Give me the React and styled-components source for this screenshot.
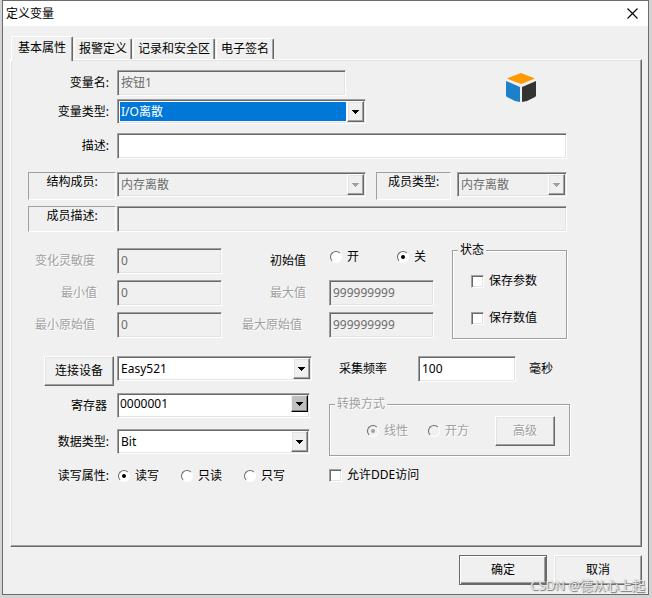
import React, { useState } from 'react';
import styled, { createGlobalStyle, css } from 'styled-components';

const GlobalStyle = createGlobalStyle`
  *, *::before, *::after {
    box-sizing: border-box;
  }

  body {
    margin: 0;
    background: #d4d4d4;
  }

  body, button, input, select {
    font-family: "Noto Sans", "Noto Sans CJK SC", sans-serif;
    font-size: 12px;
    line-height: 16px;
    color: #000;
  }
`;

const sunken = css`
  border: 1px solid;
  border-color: #a0a0a0 #fff #fff #a0a0a0;
  box-shadow: inset 1px 1px 0 #696969, inset -1px -1px 0 #e3e3e3;
`;

const raised = css`
  border: 1px solid;
  border-color: #fff #696969 #696969 #fff;
  box-shadow: inset -1px -1px 0 #a0a0a0, inset 1px 1px 0 #e3e3e3;
`;

const faded = css`
  color: #a0a0a0;
  text-shadow: 1px 1px 0 #fff;
`;

const Page = styled.div`
  padding: 0 3px 3px 2px;
`;

const Dialog = styled.form`
  position: relative;
  border: 1px solid #6b6b6b;
  background: #f0f0f0;
`;

const TitleBar = styled.header`
  display: flex;
  align-items: center;
  justify-content: space-between;
  height: 25px;
  padding: 0 10px 0 3px;
  background: #fff;
`;

const Title = styled.h1`
  margin: 0;
  font-size: 12px;
  font-weight: normal;
`;

const CloseButton = styled.button`
  display: flex;
  padding: 0;
  border: 0;
  background: none;
`;

const Tabs = styled.div`
  display: flex;
  align-items: flex-end;
  gap: 1px;
  padding: 10px 8px 0;
`;

const Tab = styled.button`
  position: relative;
  height: ${({ $active }) => ($active ? 25 : 21)}px;
  margin-bottom: ${({ $active }) => ($active ? -2 : 0)}px;
  padding: ${({ $active }) => ($active ? '0 6px 3px' : '0 4px')};
  border: 0 solid;
  border-width: 1px 1px 0 1px;
  border-color: #fff #696969 #fff #fff;
  border-radius: 2px 2px 0 0;
  box-shadow: inset -1px 0 0 #a0a0a0;
  background: #f0f0f0;
  white-space: nowrap;
`;

const Panel = styled.section`
  margin: 0 6px 0 7px;
  padding: 10px 74px 52px 1px;
  ${raised}
`;

const Split = styled.div`
  display: flex;
  align-items: flex-start;
  justify-content: space-between;
  margin-bottom: ${({ $space }) => $space || 0}px;
`;

const Column = styled.div`
  display: flex;
  flex: none;
  flex-direction: column;
  gap: ${({ $gap }) => $gap || 0}px;
  margin-right: ${({ $lead }) => ($lead ? 'auto' : 0)};
`;

const Sections = styled.div`
  display: flex;
  align-items: flex-start;
  gap: 17px;
`;

const Row = styled.div`
  display: flex;
  align-items: ${({ $align }) => $align || 'center'};
  margin-bottom: ${({ $space }) => $space || 0}px;
`;

const Label = styled.label`
  flex: none;
  width: ${({ $width }) => $width || 105}px;
  padding-right: ${({ $inset }) => $inset || 8}px;
  text-align: right;
  ${({ $tall }) => $tall && 'line-height: 26px;'}
  ${({ $faded }) => $faded && faded}
`;

const GroupLabel = styled.label`
  flex: none;
  width: ${({ $width }) => $width}px;
  height: ${({ $tall }) => ($tall ? 28 : 26)}px;
  margin: ${({ $margin }) => $margin};
  padding-top: 1px;
  border: 1px solid;
  border-color: #a0a0a0 #fff #fff #a0a0a0;
  text-align: center;
`;

const TextInput = styled.input`
  flex: ${({ $width }) => ($width ? 'none' : '1 1 0')};
  width: ${({ $width }) => ($width ? `${$width}px` : 'auto')};
  min-width: 0;
  height: 26px;
  padding: 0 3px 2px;
  border-radius: 0;
  outline: 0;
  background: #fff;
  ${sunken}

  &:disabled {
    background: #f0f0f0;
    color: #6d6d6d;
  }
`;

const ComboFrame = styled.div`
  display: flex;
  flex: ${({ $width }) => ($width ? 'none' : '1 1 0')};
  width: ${({ $width }) => ($width ? `${$width}px` : 'auto')};
  height: 25px;
  padding: 1px;
  background: ${({ $disabled }) => ($disabled ? '#f0f0f0' : '#fff')};
  ${sunken}
`;

const ComboSelect = styled.select`
  flex: 1 1 0;
  min-width: 0;
  margin: 1px;
  padding: 0 1px;
  border: 0;
  border-radius: 0;
  outline: 0;
  appearance: none;
  background: ${({ $selected }) => ($selected ? '#0078d7' : 'transparent')};
  color: ${({ $selected }) => ($selected ? '#fff' : '#000')};

  &:disabled {
    color: #6d6d6d;
    opacity: 1;
  }
`;

const ComboInput = styled.input`
  flex: 1 1 0;
  min-width: 0;
  padding: 0 1px 3px;
  border: 0;
  outline: 0;
  background: transparent;
`;

const ArrowBox = styled.span`
  display: flex;
  align-items: center;
  justify-content: center;
  flex: none;
  width: 17px;
  pointer-events: none;
  background: #f0f0f0;
  color: ${({ $disabled }) => ($disabled ? '#a0a0a0' : '#000')};
  ${raised}
`;

const PickButton = styled.button`
  display: flex;
  align-items: center;
  justify-content: center;
  flex: none;
  width: 17px;
  height: 17px;
  padding: 0;
  border: 1px solid;
  border-color: #f0f0f0 #000 #000 #f0f0f0;
  box-shadow: inset -1px -1px 0 #808080;
  background: #c0c0c0;
`;

const PushButton = styled.button`
  flex: none;
  width: ${({ $width }) => $width}px;
  height: 30px;
  margin: ${({ $margin }) => $margin || 0};
  padding: 0;
  border-radius: 0;
  background: #f0f0f0;
  ${raised}
  ${({ $primary }) => $primary && css`
    border-color: #696969;
    box-shadow: inset 1px 1px 0 #fff, inset -1px -1px 0 #696969,
      inset -2px -2px 0 #a0a0a0;
  `}

  &:disabled {
    ${faded}
  }
`;

const Choices = styled.div`
  display: flex;
  gap: ${({ $gap }) => $gap}px;
  height: ${({ $height }) => $height || 18}px;
`;

const ChoiceLabel = styled.label`
  display: flex;
  align-items: center;
  gap: 5px;
  white-space: nowrap;
  ${({ $faded }) => $faded && faded}
`;

const Radio = styled.input`
  display: grid;
  place-items: center;
  flex: none;
  width: 12px;
  height: 12px;
  margin: 0 0 0 1px;
  appearance: none;
  border: 1px solid;
  border-color: #696969 #fff #fff #696969;
  border-radius: 50%;
  background: #fff;

  &:checked::after {
    content: "";
    width: 4px;
    height: 4px;
    border-radius: 50%;
    background: #000;
  }

  &:disabled {
    background: #f0f0f0;
  }

  &:disabled:checked::after {
    background: #a0a0a0;
  }
`;

const Checkbox = styled.input`
  display: grid;
  place-items: center;
  flex: none;
  width: 13px;
  height: 13px;
  margin: 0;
  appearance: none;
  background: #fff;
  ${sunken}

  &:checked::after {
    content: "";
    width: 4px;
    height: 7px;
    border: solid #000;
    border-width: 0 2px 2px 0;
    transform: rotate(45deg);
  }
`;

const Group = styled.fieldset`
  flex: none;
  min-width: 0;
  width: ${({ $width }) => $width}px;
  margin: ${({ $margin }) => $margin || 0};
  padding: 0;
  border: 1px solid #a0a0a0;
  box-shadow: 1px 1px 0 #fff, inset 1px 1px 0 #fff;
`;

const Legend = styled.legend`
  margin-left: 5px;
  padding: 0 2px;
  background: #f0f0f0;
  ${({ $faded }) => $faded && faded}
`;

const StateOptions = styled.div`
  display: flex;
  flex-direction: column;
  gap: 19px;
  padding: 14px 0 11px 18px;
`;

const ConvertOptions = styled.div`
  display: flex;
  justify-content: space-between;
  padding: 4px 14px 9px 36px;
`;

const Unit = styled.span`
  margin-left: 13px;
`;

const Footer = styled.footer`
  display: flex;
  justify-content: flex-end;
  gap: 7px;
  padding: 8px 6px 9px;
`;

const Watermark = styled.span`
  position: absolute;
  right: 3px;
  bottom: 0;
  font-size: 13px;
  line-height: 18px;
  color: rgba(255, 255, 255, 0.8);
  text-shadow: 1px 1px 1px #777, 0 0 1px #999;
  pointer-events: none;
`;

const CubeIcon = styled.svg`
  flex: none;
  margin: 3px 31px 0 0;
`;

const Arrow = () => (
  <svg width="7" height="4" viewBox="0 0 7 4" shapeRendering="crispEdges" aria-hidden="true">
    <path d="M0 0h7v1H6v1H5v1H4v1H3V3H2V2H1V1H0z" fill="currentColor" />
  </svg>
);

const Combo = ({ id, value, width, selected, disabled }) => (
  <ComboFrame $width={width} $disabled={disabled}>
    <ComboSelect id={id} defaultValue={value} $selected={selected} disabled={disabled}>
      <option>{value}</option>
    </ComboSelect>
    <ArrowBox $disabled={disabled}><Arrow /></ArrowBox>
  </ComboFrame>
);

const Choice = ({ name, text, value, onChange, disabled }) => (
  <ChoiceLabel $faded={disabled}>
    <Radio
      type="radio"
      name={name}
      checked={value === text}
      onChange={() => onChange && onChange(text)}
      disabled={disabled}
    />
    {text}
  </ChoiceLabel>
);

const Field = ({ id, label, value, inset, labelWidth }) => (
  <Row>
    <Label htmlFor={id} $inset={inset} $width={labelWidth} $faded>{label}</Label>
    <TextInput id={id} $width={105} defaultValue={value} disabled />
  </Row>
);

const tabs = ['基本属性', '报警定义', '记录和安全区', '电子签名'];

const App = () => {
  const [tab, setTab] = useState(tabs[0]);
  const [initial, setInitial] = useState('关');
  const [access, setAccess] = useState('读写');

  return (
    <Page>
      <GlobalStyle />
      <Dialog onSubmit={e => e.preventDefault()}>
        <TitleBar>
          <Title>定义变量</Title>
          <CloseButton type="button" aria-label="关闭">
            <svg width="11" height="11" viewBox="0 0 11 11">
              <path d="M.5.5l10 10M10.5.5l-10 10" stroke="#000" strokeWidth="1.1" />
            </svg>
          </CloseButton>
        </TitleBar>

        <Tabs role="tablist">
          {tabs.map(name => (
            <Tab
              key={name}
              type="button"
              role="tab"
              aria-selected={tab === name}
              $active={tab === name}
              onClick={() => setTab(name)}
            >
              {name}
            </Tab>
          ))}
        </Tabs>

        <Panel>
          <Split $space={9}>
            <Column $gap={3}>
              <Row>
                <Label htmlFor="name">变量名:</Label>
                <TextInput id="name" $width={229} defaultValue="按钮1" disabled />
              </Row>
              <Row>
                <Label htmlFor="type">变量类型:</Label>
                <Combo id="type" value="I/O离散" width={249} selected />
              </Row>
            </Column>
            <CubeIcon width="30" height="30" viewBox="0 0 30 30" aria-hidden="true">
              <path d="M15 0L29 5.5 15 11 1 5.5z" fill="#ff9900" />
              <path d="M0 8L14 14v15L9 28 1 24 0 23z" fill="#1c81c8" />
              <path d="M30 8L16 14v15l5-1 8-4 1-1z" fill="#333" />
            </CubeIcon>
          </Split>

          <Row $space={13}>
            <Label htmlFor="description">描述:</Label>
            <TextInput id="description" />
          </Row>
          <Row $align="flex-start" $space={6}>
            <GroupLabel htmlFor="struct" $width={88} $margin="0 1px 0 16px" $tall>结构成员:</GroupLabel>
            <Combo id="struct" value="内存离散" disabled />
            <GroupLabel htmlFor="memberType" $width={75} $margin="0 6px 0 10px" $tall>成员类型:</GroupLabel>
            <Combo id="memberType" value="内存离散" width={110} disabled />
          </Row>
          <Row $space={16}>
            <GroupLabel htmlFor="memberText" $width={88} $margin="0 1px 0 16px">成员描述:</GroupLabel>
            <TextInput id="memberText" disabled />
          </Row>

          <Split $space={17}>
            <Column $gap={6}>
              <Field id="sensitivity" label="变化灵敏度" value="0" inset={22} />
              <Field id="min" label="最小值" value="0" inset={20} />
              <Field id="rawMin" label="最小原始值" value="0" inset={22} />
            </Column>
            <Column $gap={6} $lead>
              <Row $align="flex-start">
                <Label as="span" $width={107} $inset={23} $tall>初始值</Label>
                <Choices $gap={37} role="radiogroup" aria-label="初始值">
                  <Choice name="initial" text="开" value={initial} onChange={setInitial} />
                  <Choice name="initial" text="关" value={initial} onChange={setInitial} />
                </Choices>
              </Row>
              <Field id="max" label="最大值" value="999999999" inset={23} labelWidth={107} />
              <Field id="rawMax" label="最大原始值" value="999999999" inset={27} labelWidth={107} />
            </Column>
            <Group $width={115} $margin="-6px 0 0">
              <Legend>状态</Legend>
              <StateOptions>
                <Choices>
                  <ChoiceLabel><Checkbox type="checkbox" />保存参数</ChoiceLabel>
                </Choices>
                <Choices>
                  <ChoiceLabel><Checkbox type="checkbox" />保存数值</ChoiceLabel>
                </Choices>
              </StateOptions>
            </Group>
          </Split>

          <Sections>
            <Column>
              <Row $align="flex-start" $space={7}>
                <PushButton type="button" $width={70} $margin="0 3px 0 32px">连接设备</PushButton>
                <Combo id="device" value="Easy521" width={195} />
              </Row>
              <Row $space={11}>
                <Label htmlFor="register" $inset={10}>寄存器</Label>
                <ComboFrame $width={193}>
                  <ComboInput id="register" defaultValue="0000001" />
                  <PickButton type="button" aria-label="选择寄存器"><Arrow /></PickButton>
                </ComboFrame>
              </Row>
              <Row $space={13}>
                <Label htmlFor="dataType">数据类型:</Label>
                <Combo id="dataType" value="Bit" width={193} />
              </Row>
              <Row>
                <Label as="span">读写属性:</Label>
                <Choices $gap={21} role="radiogroup" aria-label="读写属性">
                  {['读写', '只读', '只写'].map(text => (
                    <Choice key={text} name="access" text={text} value={access} onChange={setAccess} />
                  ))}
                </Choices>
              </Row>
            </Column>

            <Column>
              <Row $space={14}>
                <Label htmlFor="rate" $width={89} $inset={31}>采集频率</Label>
                <TextInput id="rate" $width={98} defaultValue="100" />
                <Unit>毫秒</Unit>
              </Row>
              <Group $width={241} disabled>
                <Legend $faded>转换方式</Legend>
                <ConvertOptions>
                  <Choices $gap={19} $height={30}>
                    <Choice name="convert" text="线性" value="线性" disabled />
                    <Choice name="convert" text="开方" value="线性" disabled />
                  </Choices>
                  <PushButton type="button" $width={60} disabled>高级</PushButton>
                </ConvertOptions>
              </Group>
              <Choices $height={38}>
                <ChoiceLabel><Checkbox type="checkbox" />允许DDE访问</ChoiceLabel>
              </Choices>
            </Column>
          </Sections>
        </Panel>

        <Footer>
          <PushButton type="submit" $width={88} $primary>确定</PushButton>
          <PushButton type="button" $width={88}>取消</PushButton>
        </Footer>
        <Watermark>CSDN @德从心上起</Watermark>
      </Dialog>
    </Page>
  );
};

export default App;
